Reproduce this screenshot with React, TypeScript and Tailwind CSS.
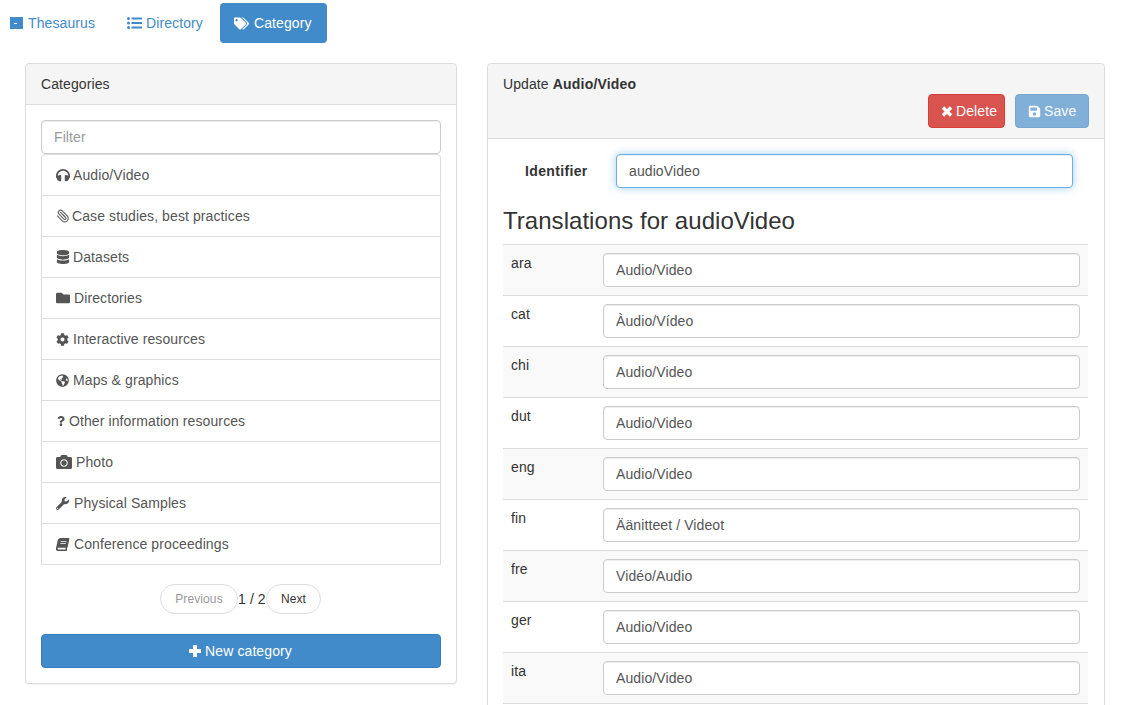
import React from "react";
import {
  FaBook,
  FaCamera,
  FaCog,
  FaDatabase,
  FaFolder,
  FaGlobeAmericas,
  FaHeadphones,
  FaQuestion,
  FaSave,
  FaTags,
  FaWrench,
} from "react-icons/fa";
import { Paperclip } from "lucide-react";

// box = icon slot width, so each label starts where the icon font would push it
const CATEGORIES = [
  { label: "Audio/Video", icon: <FaHeadphones size={14} />, box: "w-[17px]" },
  {
    label: "Case studies, best practices",
    icon: <Paperclip size={14} strokeWidth={2} className="-scale-x-100 text-[#666]" />,
    box: "w-[16px]",
  },
  { label: "Datasets", icon: <FaDatabase size={14} />, box: "w-[17px]" },
  { label: "Directories", icon: <FaFolder size={14} />, box: "w-[18px]" },
  { label: "Interactive resources", icon: <FaCog size={13} />, box: "w-[17px]" },
  { label: "Maps & graphics", icon: <FaGlobeAmericas size={13} />, box: "w-[17px]" },
  { label: "Other information resources", icon: <FaQuestion size={10} />, box: "w-[13px]" },
  { label: "Photo", icon: <FaCamera size={16} />, box: "w-[20px]" },
  { label: "Physical Samples", icon: <FaWrench size={13} />, box: "w-[18px]" },
  { label: "Conference proceedings", icon: <FaBook size={13} className="-skew-x-12" />, box: "w-[18px]" },
];

const TRANSLATIONS = [
  { lang: "ara", value: "Audio/Video" },
  { lang: "cat", value: "Àudio/Vídeo" },
  { lang: "chi", value: "Audio/Video" },
  { lang: "dut", value: "Audio/Video" },
  { lang: "eng", value: "Audio/Video" },
  { lang: "fin", value: "Äänitteet / Videot" },
  { lang: "fre", value: "Vidéo/Audio" },
  { lang: "ger", value: "Audio/Video" },
  { lang: "ita", value: "Audio/Video" },
];

const inputClass =
  "block h-[34px] rounded border bg-white px-3 text-sm text-[#555] outline-none placeholder:text-[#999]";
const inputIdle = "border-[#ccc] shadow-[inset_0_1px_1px_rgba(0,0,0,0.075)]";
const inputFocus =
  "border-[#66afe9] shadow-[inset_0_1px_1px_rgba(0,0,0,0.075),0_0_8px_rgba(102,175,233,0.6)]";

const ThesaurusIcon = () => (
  <svg width="13" height="12" viewBox="0 0 13 12" className="shrink-0">
    <rect width="13" height="12" fill="#428bca" />
    <rect x="4" y="6" width="3" height="1" fill="#fff" />
  </svg>
);

const ListIcon = () => (
  <svg width="15" height="12" viewBox="0 0 15 12" fill="#428bca" className="shrink-0">
    <rect x="0" y="0" width="3" height="3" rx="1.5" />
    <rect x="0" y="4.5" width="3" height="3" rx="1.5" />
    <rect x="0" y="9" width="3" height="3" rx="1.5" />
    <rect x="4.5" y="0.5" width="10.5" height="2" />
    <rect x="4.5" y="5" width="10.5" height="2" />
    <rect x="4.5" y="9.5" width="10.5" height="2" />
  </svg>
);

const TimesIcon = () => (
  <svg width="12" height="12" viewBox="0 0 12 12" stroke="#fff" strokeWidth="3.4" className="shrink-0">
    <path d="M2 2.5 L10 10.5 M10 2.5 L2 10.5" />
  </svg>
);

const PlusIcon = () => (
  <svg width="12" height="12" viewBox="0 0 12 12" fill="#fff" className="shrink-0">
    <rect x="4" y="0" width="4" height="12" rx="0.5" />
    <rect x="0" y="4" width="12" height="4" rx="0.5" />
  </svg>
);

export default function App() {
  return (
    <div className="h-[705px] overflow-hidden bg-white font-['Liberation_Sans',Arial,sans-serif] text-sm leading-5 tracking-[0.1px] text-[#333]">
      {/* Top nav pills */}
      <nav className="flex gap-0.5 pt-[3px] -ml-[5px]">
        <a className="flex h-10 items-center gap-[5px] rounded px-[15px] text-[#428bca]">
          <ThesaurusIcon />
          Thesaurus
        </a>
        <a className="flex h-10 items-center gap-1 rounded px-[15px] text-[#428bca]">
          <ListIcon />
          Directory
        </a>
        <a className="flex h-10 items-center gap-[5px] rounded bg-[#428bca] pr-[15px] pl-[14px] text-white">
          <FaTags size={15} />
          Category
        </a>
      </nav>

      <div className="mt-5 flex items-start gap-[30px] pl-[25px]">
        {/* Categories panel */}
        <section className="w-[432px] rounded border border-[#ddd] bg-white shadow-[0_1px_1px_rgba(0,0,0,0.05)]">
          <div className="flex h-[41px] items-center rounded-t border-b border-[#ddd] bg-[#f5f5f5] px-[15px]">
            Categories
          </div>
          <div className="p-[15px]">
            <input className={`${inputClass} ${inputIdle} w-full`} placeholder="Filter" />
            <ul>
              {CATEGORIES.map((item, i) => (
                <li
                  key={item.label}
                  className={`flex items-center border border-[#ddd] pr-[15px] pl-[14px] text-[#555] ${
                    i > 0 ? "h-[41px] border-t-0" : "h-[42px] rounded-t"
                  }`}
                >
                  <span className={`flex shrink-0 items-center ${item.box}`}>{item.icon}</span>
                  {item.label}
                </li>
              ))}
            </ul>
            <div className="mt-[19px] flex items-center justify-center pr-px">
              <button className="h-[30px] w-[78px] rounded-[15px] border border-[#ddd] bg-white text-xs text-[#999]">
                Previous
              </button>
              <span className="w-7 whitespace-nowrap">1 / 2</span>
              <button className="h-[30px] w-[55px] rounded-[15px] border border-[#ddd] bg-white text-xs text-[#333]">
                Next
              </button>
            </div>
            <button className="mt-5 flex h-[34px] w-full items-center justify-center gap-1 rounded border border-[#357ebd] bg-[#428bca] pr-px text-white">
              <PlusIcon />
              New category
            </button>
          </div>
        </section>

        {/* Update panel */}
        <section className="w-[618px] rounded border border-[#ddd] bg-white shadow-[0_1px_1px_rgba(0,0,0,0.05)]">
          <div className="h-[75px] rounded-t border-b border-[#ddd] bg-[#f5f5f5] px-[15px] pt-[10px]">
            <div>
              Update <strong className="tracking-[0.2px]">Audio/Video</strong>
            </div>
            <div className="flex justify-end gap-2.5">
              <button className="flex h-[34px] w-[77px] items-center gap-[3px] rounded border border-[#d43f3a] bg-[#d9534f] pl-3 text-white">
                <TimesIcon />
                Delete
              </button>
              <button className="flex h-[34px] w-[74px] items-center gap-[3px] rounded border border-[#357ebd] bg-[#428bca] pl-3 text-white opacity-65">
                <FaSave size={13} />
                Save
              </button>
            </div>
          </div>
          <div className="px-[15px] pt-[15px] pb-10">
            <div className="flex items-center">
              <label className="ml-[22px] w-[91px] font-bold tracking-[0.35px]">Identifier</label>
              <input className={`${inputClass} ${inputFocus} w-[457px]`} defaultValue="audioVideo" />
            </div>
            <h3 className="mt-5 mb-2.5 text-2xl leading-[26px] font-normal tracking-[0.04px]">
              Translations for audioVideo
            </h3>
            <table className="w-[585px] border-collapse border-b border-[#ddd]">
              <tbody>
                {TRANSLATIONS.map((row, i) => (
                  <tr
                    key={row.lang}
                    className={`border-t border-[#ddd] ${i % 2 === 0 ? "bg-[#f9f9f9]" : ""}`}
                  >
                    <td className="w-[92px] p-2 align-top">{row.lang}</td>
                    <td className="p-2 align-top">
                      <input className={`${inputClass} ${inputIdle} w-[477px]`} defaultValue={row.value} />
                    </td>
                  </tr>
                ))}
              </tbody>
            </table>
          </div>
        </section>
      </div>
    </div>
  );
}
